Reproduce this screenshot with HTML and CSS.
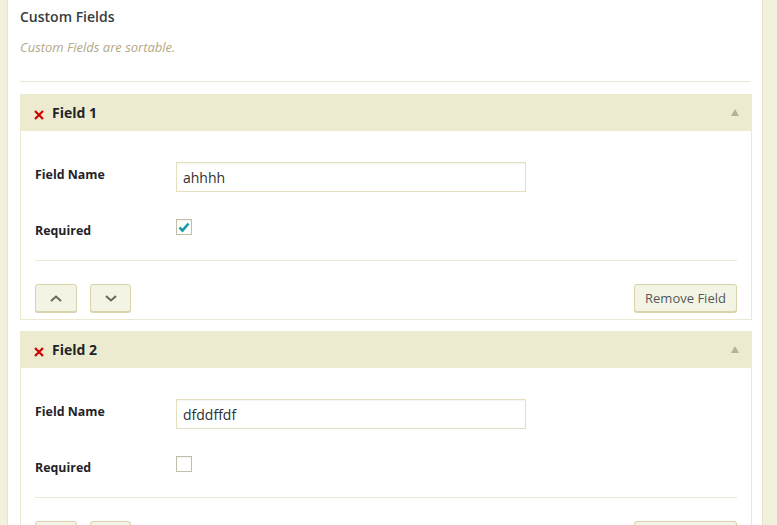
FILE: index.html
```html
<!DOCTYPE html>
<html>
<head>
<meta charset="utf-8">
<link rel="stylesheet" href="styles.css">
</head>
<body>
<div class="panel">
  <h2 class="title">Custom Fields</h2>
  <p class="desc">Custom Fields are sortable.</p>
  <div class="divider"></div>

  <div class="field">
    <div class="field-head">
      <span class="remove-x">
        <svg width="10" height="10" viewBox="0 0 10 10"><path d="M1 1L9 9M9 1L1 9" stroke="#d10000" stroke-width="2.2" fill="none"/></svg>
      </span>
      <span class="field-title">Field 1</span>
      <span class="toggle"></span>
    </div>
    <div class="field-body">
      <div class="row">
        <label class="lbl">Field Name</label>
        <input class="text" type="text" value="ahhhh">
      </div>
      <div class="row row-check">
        <label class="lbl">Required</label>
        <span class="check checked">
          <svg width="12" height="11" viewBox="0 0 12 11"><path d="M1.5 5.5L4.5 8.5L10.5 1.5" stroke="#1c98aa" stroke-width="2.6" fill="none"/></svg>
        </span>
      </div>
      <div class="sep"></div>
      <div class="actions">
        <button class="btn arrow"><svg width="12" height="7" viewBox="0 0 12 7"><path d="M1 6L6 1.5L11 6" stroke="#6d6552" stroke-width="2" fill="none"/></svg></button>
        <button class="btn arrow arrow-down"><svg width="12" height="7" viewBox="0 0 12 7"><path d="M1 1L6 5.5L11 1" stroke="#6d6552" stroke-width="2" fill="none"/></svg></button>
        <button class="btn remove">Remove Field</button>
      </div>
    </div>
  </div>

  <div class="field">
    <div class="field-head">
      <span class="remove-x">
        <svg width="10" height="10" viewBox="0 0 10 10"><path d="M1 1L9 9M9 1L1 9" stroke="#d10000" stroke-width="2.2" fill="none"/></svg>
      </span>
      <span class="field-title">Field 2</span>
      <span class="toggle"></span>
    </div>
    <div class="field-body">
      <div class="row">
        <label class="lbl">Field Name</label>
        <input class="text" type="text" value="dfddffdf">
      </div>
      <div class="row row-check">
        <label class="lbl">Required</label>
        <span class="check"></span>
      </div>
      <div class="sep"></div>
      <div class="actions">
        <button class="btn arrow"><svg width="12" height="7" viewBox="0 0 12 7"><path d="M1 6L6 1.5L11 6" stroke="#6d6552" stroke-width="2" fill="none"/></svg></button>
        <button class="btn arrow arrow-down"><svg width="12" height="7" viewBox="0 0 12 7"><path d="M1 1L6 5.5L11 1" stroke="#6d6552" stroke-width="2" fill="none"/></svg></button>
        <button class="btn remove">Remove Field</button>
      </div>
    </div>
  </div>
</div>
</body>
</html>
```

FILE: styles.css
```css
html, body {
  margin: 0;
  padding: 0;
}
body {
  background: #f2f1dc;
  font-family: "Open Sans", "DejaVu Sans", sans-serif;
  height: 525px;
  overflow: hidden;
}
.panel {
  margin-left: 7px;
  width: 756px;
  min-height: 600px;
  background: #fff;
  border-left: 1px solid #e7e5c8;
  border-right: 1px solid #e7e5c8;
  padding: 0 12px 0 12px;
  box-sizing: border-box;
}
.title {
  margin: 0;
  padding-top: 7px;
  font-size: 14px;
  line-height: 19px;
  font-weight: 600;
  color: #373c3f;
}
.desc {
  margin: 0;
  padding-top: 13px;
  font-size: 13px;
  line-height: 17px;
  font-style: italic;
  color: #b3a986;
}
.divider {
  margin-top: 25px;
  height: 1px;
  background: #ebe9d3;
}
.field {
  margin-top: 12px;
  width: 732px;
}
.field + .field {
  margin-top: 11px;
}
.field-head {
  height: 37px;
  background: #ecebd0;
  display: flex;
  align-items: center;
  padding: 0 14px;
  box-sizing: border-box;
}
.remove-x {
  width: 10px;
  height: 10px;
  display: flex;
  margin-top: 4px;
  margin-right: 8px;
}
.field-title {
  font-size: 14px;
  font-weight: 700;
  color: #1f2328;
  flex: 1;
}
.toggle {
  width: 0;
  height: 0;
  border-left: 4.5px solid transparent;
  border-right: 4.5px solid transparent;
  border-bottom: 7px solid #b7b092;
  margin-right: -1px;
}
.field-body {
  border: 1px solid #ebe9d1;
  border-top: none;
  padding: 31px 14px 7px;
}
.row {
  display: flex;
  align-items: flex-start;
}
.lbl {
  width: 141px;
  flex: none;
  font-size: 12.4px;
  font-weight: 700;
  color: #1f2328;
  padding-top: 5px;
  line-height: 16px;
}
.text {
  width: 350px;
  height: 30px;
  box-sizing: border-box;
  border: 1px solid #e5e1bf;
  box-shadow: inset 0 1px 2px rgba(0,0,0,0.05);
  padding: 0 6px;
  margin: 0;
  font-family: "Open Sans", "DejaVu Sans", sans-serif;
  font-size: 14px;
  color: #2d3033;
  background: #fff;
  outline: none;
}
.row-check {
  margin-top: 27px;
}
.row-check .lbl {
  padding-top: 4px;
}
.check {
  width: 16px;
  height: 16px;
  box-sizing: border-box;
  border: 1px solid #c3bfa5;
  background: #fff;
  display: flex;
  align-items: center;
  justify-content: center;
  box-shadow: inset 0 1px 2px rgba(0,0,0,0.06);
}
.sep {
  margin-top: 21px;
  height: 1px;
  background: #ebe9d1;
}
.actions {
  margin-top: 23px;
  display: flex;
  align-items: center;
}
.btn {
  height: 28px;
  box-sizing: border-box;
  border: 1px solid #d9d3ac;
  border-radius: 3px;
  background: #f4f4e4;
  box-shadow: 0 1px 0 #d9d3ac;
  margin: 0;
  padding: 0;
  font-family: "Open Sans", "DejaVu Sans", sans-serif;
  display: flex;
  align-items: center;
  justify-content: center;
}
.arrow {
  width: 42px;
}
.arrow-down {
  width: 41px;
  margin-left: 13px;
}
.remove {
  margin-left: auto;
  width: 103px;
  font-size: 13px;
  color: #55585b;
}
```
